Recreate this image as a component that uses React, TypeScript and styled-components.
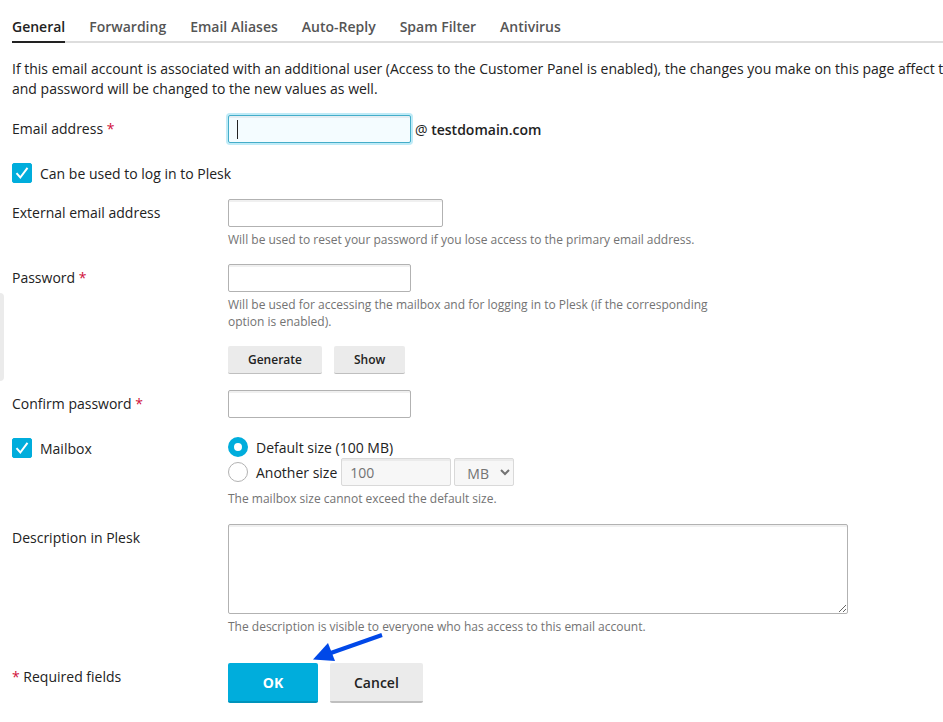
import { useState } from 'react';
import styled, { createGlobalStyle, css } from 'styled-components';

const GlobalStyle = createGlobalStyle`
  * {
    box-sizing: border-box;
  }

  body {
    margin: 0;
    background-color: #fff;
    color: #222;
    font-family: 'Open Sans', 'Liberation Sans', sans-serif;
    font-size: 14px;
    line-height: 20px;
  }

  button,
  input,
  select,
  textarea {
    margin: 0;
    font-family: inherit;
    font-size: 14px;
    color: inherit;
  }
`;

const Page = styled.main`
  position: relative;
  padding: 16px 0 16px 12px;
  overflow: hidden;
`;

const SidebarHandle = styled.button`
  position: absolute;
  top: 293px;
  left: 0;
  width: 4px;
  height: 88px;
  padding: 0;
  border: 0;
  border-radius: 0 4px 4px 0;
  background-color: #ebebeb;
`;

const Tabs = styled.nav`
  display: flex;
  gap: 24px;
  border-bottom: 2px solid #ddd;
`;

const Tab = styled.a<{ $active?: boolean }>`
  margin-bottom: -2px;
  padding: 1px 0 4px;
  border-bottom: 2px solid ${({ $active }) => ($active ? '#222' : 'transparent')};
  color: ${({ $active }) => ($active ? '#222' : '#555')};
  font-weight: 600;
  text-decoration: none;
`;

const Intro = styled.p`
  margin: 16px 0;
  white-space: nowrap;
`;

const Form = styled.form`
  display: flex;
  flex-direction: column;
  gap: 16px;
`;

const Row = styled.div`
  display: grid;
  grid-template-columns: 216px minmax(0, 1fr);
`;

const Label = styled.label`
  padding-top: 4px;
`;

const Note = styled.div`
  padding-top: 4px;
`;

const Star = styled.span`
  color: #d0103a;
`;

const Line = styled.div`
  display: flex;
  align-items: center;
  gap: 4px;
`;

const Hint = styled.p`
  max-width: 500px;
  margin: 4px 0 0;
  color: #737373;
  font-size: 12px;
  line-height: 17px;
`;

const fieldStyle = css`
  border: 1px solid #b2b2b2;
  border-radius: 2px;
  background-color: #fff;
  box-shadow: inset 0 2px 0 #f0f0f0;
  outline: none;

  &:disabled {
    border-color: #d9d9d9;
    background-color: #f7f7f7;
    box-shadow: inset 0 2px 0 #ebebeb;
    color: #737373;
    opacity: 1;
  }
`;

const Input = styled.input<{ $width: number }>`
  ${fieldStyle}
  width: ${({ $width }) => $width}px;
  height: 28px;
  padding: 0 8px;
`;

const ActiveInput = styled(Input)`
  border-color: #44adc9;
  background: linear-gradient(#222, #222) 8px 4px / 1px 19px no-repeat #f4fcff;
  box-shadow: 0 0 0 2px #bfebf7, inset 0 2px 0 #e5edf2;
  caret-color: transparent;
`;

const Domain = styled.span`
  padding-top: 2px;

  b {
    font-weight: 600;
  }
`;

const Select = styled.select`
  ${fieldStyle}
  width: 60px;
  height: 28px;
  padding: 2px 0 0 8px;
`;

const TextArea = styled.textarea`
  ${fieldStyle}
  display: block;
  width: 620px;
  max-width: 100%;
  height: 90px;
  padding: 4px 8px;
  resize: both;
`;

const CheckLine = styled.div`
  display: flex;
  align-items: flex-start;
  gap: 8px;
  height: 24px;
  padding-top: 4px;
`;

const CheckLabel = styled.label`
  padding-top: 1px;
`;

const CheckBox = styled.span`
  display: grid;
  width: 20px;
  height: 20px;

  > * {
    grid-area: 1 / 1;
  }

  svg {
    pointer-events: none;
  }

  input:not(:checked) + svg {
    display: none;
  }
`;

const CheckInput = styled.input`
  appearance: none;
  width: 20px;
  height: 20px;
  border: 1px solid #b2b2b2;
  border-radius: 2px;

  &:checked {
    border-color: #00addc;
    background-color: #00addc;
  }
`;

const RadioLine = styled.div`
  display: flex;
  align-items: center;
  min-height: 24px;

  &:first-child {
    padding-top: 2px;
  }

  label {
    padding: 1px 4px 0 8px;
  }

  select {
    margin-left: 3px;
  }
`;

const RadioGroup = styled.div`
  padding-bottom: 1px;
`;

const Radio = styled.input`
  appearance: none;
  width: 20px;
  height: 20px;
  border: 1px solid #b2b2b2;
  border-radius: 50%;

  &:checked {
    border: 6px solid #00addc;
  }
`;

const SmallButton = styled.button`
  height: 28px;
  padding: 0 20px;
  border: 0;
  border-bottom: 1px solid #bfbfbf;
  border-radius: 2px;
  background-color: #ebebeb;
  font-size: 12px;
  font-weight: 600;
`;

const ButtonLine = styled.div`
  display: flex;
  gap: 12px;
`;

const Footer = styled(Row)`
  margin-top: 12px;
`;

const Actions = styled(ButtonLine)`
  position: relative;
`;

const Action = styled.button<{ $primary?: boolean }>`
  min-width: 90px;
  height: 40px;
  padding: 0 24px;
  border: 0;
  border-bottom: 2px solid ${({ $primary }) => ($primary ? '#0093bb' : '#bfbfbf')};
  border-radius: 2px;
  background-color: ${({ $primary }) => ($primary ? '#00addc' : '#ebebeb')};
  color: ${({ $primary }) => ($primary ? '#fff' : '#222')};
  font-weight: ${({ $primary }) => ($primary ? 700 : 600)};
`;

const Arrow = styled.svg`
  position: absolute;
  top: -32px;
  left: 84px;
  pointer-events: none;
`;

const TABS = [
  'General',
  'Forwarding',
  'Email Aliases',
  'Auto-Reply',
  'Spam Filter',
  'Antivirus',
];

const Check = ({ id }: { id: string }) => (
  <CheckBox>
    <CheckInput id={id} type='checkbox' defaultChecked />
    <svg width='20' height='20' viewBox='0 0 20 20' fill='none'>
      <path d='M4.5 10.2 8.3 14.5 15.5 4.8' stroke='#fff' strokeWidth='2' />
    </svg>
  </CheckBox>
);

const App = () => {
  const [size, setSize] = useState('default');

  return (
    <Page>
      <GlobalStyle />
      <SidebarHandle type='button' aria-label='Toggle sidebar' />

      <Tabs>
        {TABS.map((tab, index) => (
          <Tab key={tab} href='#' $active={index === 0}>
            {tab}
          </Tab>
        ))}
      </Tabs>

      <Intro>
        If this email account is associated with an additional user (Access to
        the Customer Panel is enabled), the changes you make on this page
        affect t
        <br />
        and password will be changed to the new values as well.
      </Intro>

      <Form onSubmit={(e) => e.preventDefault()}>
        <Row>
          <Label htmlFor='email'>
            Email address <Star>*</Star>
          </Label>
          <Line>
            <ActiveInput id='email' type='text' $width={183} />
            <Domain>
              @ <b>testdomain.com</b>
            </Domain>
          </Line>
        </Row>

        <CheckLine>
          <Check id='login' />
          <CheckLabel htmlFor='login'>Can be used to log in to Plesk</CheckLabel>
        </CheckLine>

        <Row>
          <Label htmlFor='external'>External email address</Label>
          <div>
            <Line>
              <Input id='external' type='email' $width={215} />
            </Line>
            <Hint>
              Will be used to reset your password if you lose access to the
              primary email address.
            </Hint>
          </div>
        </Row>

        <Row>
          <Label htmlFor='password'>
            Password <Star>*</Star>
          </Label>
          <div>
            <Line>
              <Input id='password' type='password' $width={183} />
            </Line>
            <Hint>
              Will be used for accessing the mailbox and for logging in to Plesk
              (if the corresponding option is enabled).
            </Hint>
          </div>
        </Row>

        <Row>
          <span />
          <ButtonLine>
            <SmallButton type='button'>Generate</SmallButton>
            <SmallButton type='button'>Show</SmallButton>
          </ButtonLine>
        </Row>

        <Row>
          <Label htmlFor='confirm'>
            Confirm password <Star>*</Star>
          </Label>
          <Line>
            <Input id='confirm' type='password' $width={183} />
          </Line>
        </Row>

        <Row>
          <CheckLine>
            <Check id='mailbox' />
            <CheckLabel htmlFor='mailbox'>Mailbox</CheckLabel>
          </CheckLine>
          <RadioGroup>
            <RadioLine>
              <Radio
                id='size-default'
                type='radio'
                name='size'
                checked={size === 'default'}
                onChange={() => setSize('default')}
              />
              <label htmlFor='size-default'>Default size (100 MB)</label>
            </RadioLine>
            <RadioLine>
              <Radio
                id='size-another'
                type='radio'
                name='size'
                checked={size === 'another'}
                onChange={() => setSize('another')}
              />
              <label htmlFor='size-another'>Another size</label>
              <Input
                type='text'
                aria-label='Mailbox size'
                defaultValue='100'
                disabled={size === 'default'}
                $width={110}
              />
              <Select aria-label='Size unit' disabled={size === 'default'}>
                <option>MB</option>
              </Select>
            </RadioLine>
            <Hint>The mailbox size cannot exceed the default size.</Hint>
          </RadioGroup>
        </Row>

        <Row>
          <Label htmlFor='description'>Description in Plesk</Label>
          <div>
            <TextArea id='description' />
            <Hint>
              The description is visible to everyone who has access to this
              email account.
            </Hint>
          </div>
        </Row>

        <Footer>
          <Note>
            <Star>*</Star> Required fields
          </Note>
          <Actions>
            <Action type='submit' $primary>
              OK
            </Action>
            <Action type='button'>Cancel</Action>
            <Arrow width='72' height='34' viewBox='0 0 72 34'>
              <path d='M70 4 16 23' stroke='#0048e8' strokeWidth='4' />
              <path d='M1 28.500 16 12 23 30Z' fill='#0048e8' />
            </Arrow>
          </Actions>
        </Footer>
      </Form>
    </Page>
  );
};

export default App;
